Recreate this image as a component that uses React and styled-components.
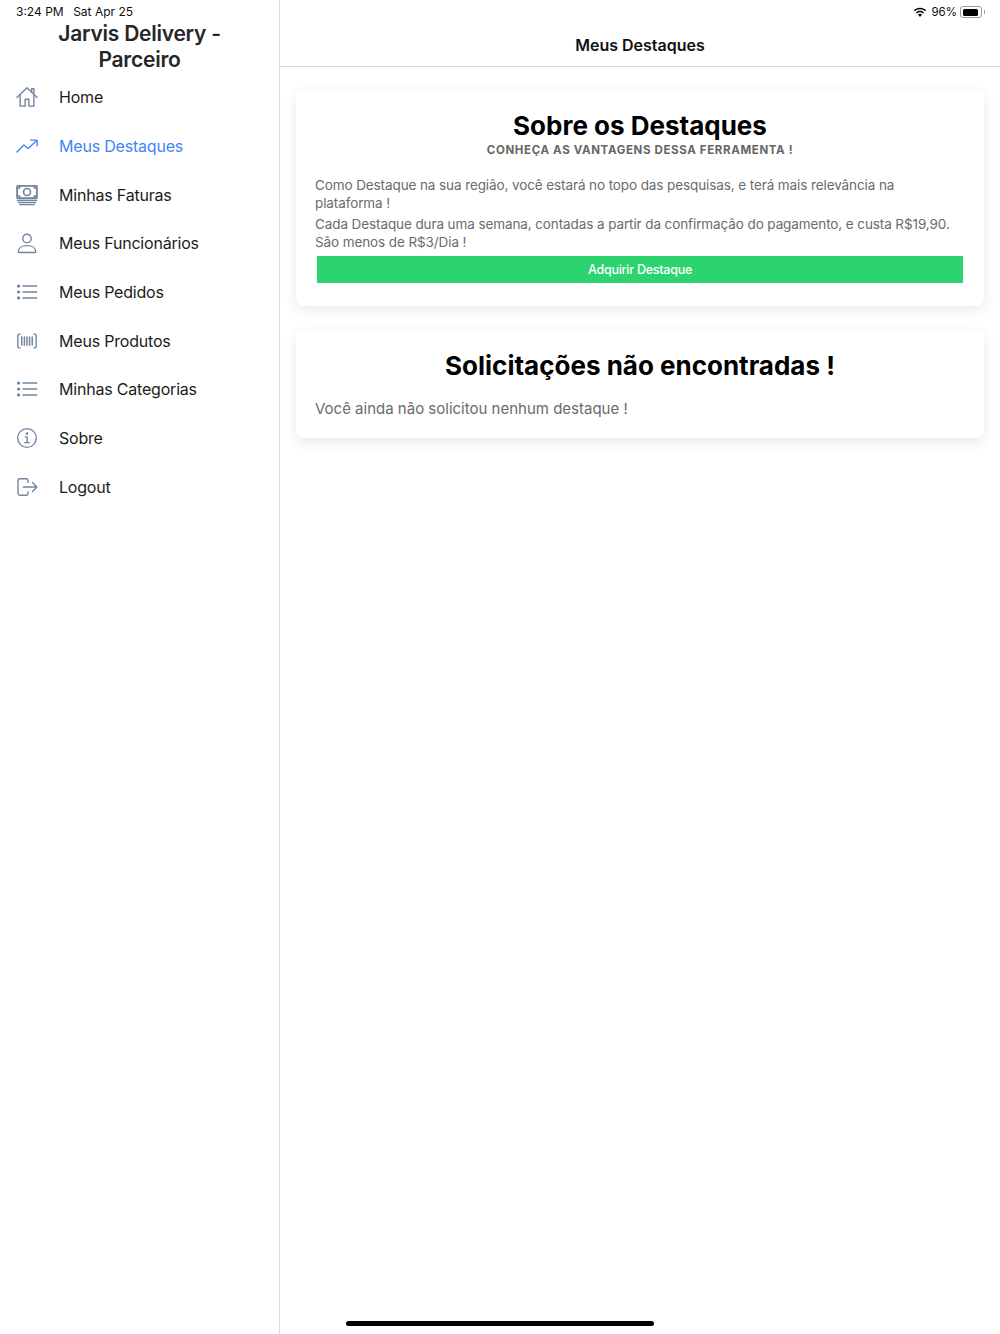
import React from 'react';
import styled, {createGlobalStyle} from 'styled-components';

const GlobalStyle = createGlobalStyle`
  html, body {
    margin: 0;
    padding: 0;
    height: 100%;
    background: #fff;
    font-family: Inter, "Noto Sans", sans-serif;
  }
  #root {
    height: 100%;
  }
`

const IconBase = ({children, size = 22}) => (
    <svg width={size} height={size} viewBox="0 0 24 24" fill="none" stroke="currentColor" strokeWidth="1.5" strokeLinecap="round" strokeLinejoin="round">
        {children}
    </svg>
)

const HomeIcon = () => (
    <IconBase>
        <path d="M1 12.5 12 2l11 10.500"/>
        <path d="M4.500 10v12h5.500v-7.500h4V22h5.500V10"/>
        <path d="M17 6V3h2.500v5.200"/>
    </IconBase>
)

const TrendIcon = () => (
    <IconBase>
        <path d="M1 18.500 8.600 11l4.600 3.800L22.400 6.400"/>
        <path d="M16 5.600h7v6.200"/>
    </IconBase>
)

const MoneyIcon = () => (
    <IconBase>
        <rect x="1.200" y="2" width="21.600" height="13.500" rx="0.800" strokeWidth="2"/>
        <circle cx="12" cy="8.700" r="3.800" strokeWidth="1.800"/>
        <path d="M1.500 5c2 0 3-1 3.200-2.600M22.500 5c-2 0-3-1-3.200-2.600M1.500 12.500c2 0 3 1 3.200 2.600M22.500 12.500c-2 0-3 1-3.200 2.600"/>
        <path d="M1.500 18h21M2.500 20.300h19M4 22.500h16" strokeWidth="1.400"/>
    </IconBase>
)

const UserIcon = () => (
    <IconBase>
        <circle cx="12" cy="7" r="4.600"/>
        <path d="M2.500 21.500c0-4.200 4-6.600 9.500-6.600s9.500 2.400 9.500 6.600c0 .5-.4.900-.9.900H3.400c-.5 0-.9-.4-.9-.9Z"/>
    </IconBase>
)

const ListIcon = () => (
    <IconBase>
        <path d="M7.500 5.500h15M7.500 12h15M7.500 18.500h15"/>
        <circle cx="2.800" cy="5.500" r="1" fill="currentColor"/>
        <circle cx="2.800" cy="12" r="1" fill="currentColor"/>
        <circle cx="2.800" cy="18.500" r="1" fill="currentColor"/>
    </IconBase>
)

const BarcodeIcon = () => (
    <IconBase>
        <path d="M4.500 4.500H3.200C2.500 4.500 2 5 2 5.700v12.600c0 .7.500 1.200 1.200 1.200h1.300M19.500 4.500h1.300c.7 0 1.200.5 1.200 1.200v12.600c0 .7-.5 1.200-1.200 1.200h-1.300"/>
        <path d="M6.300 7.500v9M9.200 7.500v9M12 7.500v9M14.800 7.500v9M17.700 7.500v9" strokeWidth="1.600"/>
    </IconBase>
)

const InfoIcon = () => (
    <IconBase>
        <circle cx="12" cy="12" r="10.200"/>
        <path d="M10 10.800h2.200V17M9.600 17h5"/>
        <circle cx="12" cy="7.200" r="0.700" fill="currentColor"/>
    </IconBase>
)

const LogoutIcon = () => (
    <IconBase>
        <path d="M13 7V4.600c0-1-.8-1.600-1.600-1.600H4.200C3 3 2.200 3.800 2.200 4.900v14.200c0 1.100.8 1.900 2 1.900h7.200c.8 0 1.600-.6 1.600-1.600V17"/>
        <path d="M8 12h14.500M18 7l4.800 5-4.800 5"/>
    </IconBase>
)

const WifiIcon = () => (
    <svg width="14" height="11" viewBox="0 0 16 12" fill="#000">
        <path d="M8 2.200c2.300 0 4.400.9 6 2.400l1.100-1.200C13.200 1.600 10.700.5 8 .5S2.800 1.600.9 3.400L2 4.600c1.600-1.500 3.700-2.400 6-2.400Z"/>
        <path d="M8 5.700c1.300 0 2.500.5 3.500 1.400l1.100-1.200C11.400 4.700 9.800 4 8 4s-3.400.7-4.600 1.900l1.100 1.200c1-.9 2.200-1.400 3.500-1.400Z"/>
        <path d="M8 7.500c-.9 0-1.700.3-2.300.9L8 11l2.300-2.600c-.6-.6-1.400-.9-2.300-.9Z"/>
    </svg>
)

const MENU = [
    {label: 'Home', icon: HomeIcon},
    {label: 'Meus Destaques', icon: TrendIcon, active: true},
    {label: 'Minhas Faturas', icon: MoneyIcon},
    {label: 'Meus Funcionários', icon: UserIcon},
    {label: 'Meus Pedidos', icon: ListIcon},
    {label: 'Meus Produtos', icon: BarcodeIcon},
    {label: 'Minhas Categorias', icon: ListIcon},
    {label: 'Sobre', icon: InfoIcon},
    {label: 'Logout', icon: LogoutIcon},
]

const App = () => {
    return (
        <Page>
            <GlobalStyle/>
            <Sidebar>
                <Brand>Jarvis Delivery - Parceiro</Brand>
                <Menu>
                    {MENU.map(({label, icon: Icon, active}) => (
                        <MenuItem key={label} $active={active}>
                            <MenuIcon $active={active}><Icon/></MenuIcon>
                            {label}
                        </MenuItem>
                    ))}
                </Menu>
            </Sidebar>
            <Main>
                <Header>Meus Destaques</Header>
                <Content>
                    <Card>
                        <CardTitle>Sobre os Destaques</CardTitle>
                        <CardSubtitle>Conheça as vantagens dessa ferramenta !</CardSubtitle>
                        <Paragraph>Como Destaque na sua região, você estará no topo das pesquisas, e terá mais relevância na plataforma !</Paragraph>
                        <Paragraph>Cada Destaque dura uma semana, contadas a partir da confirmação do pagamento, e custa R$19,90. São menos de R$3/Dia !</Paragraph>
                        <BuyButton>Adquirir Destaque</BuyButton>
                    </Card>
                    <Card $compact>
                        <CardTitle>Solicitações não encontradas !</CardTitle>
                        <EmptyText>Você ainda não solicitou nenhum destaque !</EmptyText>
                    </Card>
                </Content>
            </Main>
            <StatusLeft>
                <span>3:24 PM</span>
                <span>Sat Apr 25</span>
            </StatusLeft>
            <StatusRight>
                <WifiIcon/>
                <span>96%</span>
                <Battery><BatteryFill/></Battery>
                <BatteryCap/>
            </StatusRight>
            <HomeIndicator/>
        </Page>
    );
};

const Page = styled.div`
  display: flex;
  position: relative;
  width: 1000px;
  height: 1334px;
  overflow: hidden;
  background: #fff;
`

const Sidebar = styled.aside`
  flex: 0 0 280px;
  box-sizing: border-box;
  padding-top: 21px;
  border-right: 1px solid #d9d9d9;
`

const Brand = styled.div`
  width: 190px;
  margin: 0 auto;
  color: #262626;
  font-size: 21px;
  font-weight: 600;
  letter-spacing: -0.25px;
  line-height: 26px;
  text-align: center;
`

const Menu = styled.nav`
  display: flex;
  flex-direction: column;
`

const MenuItem = styled.div`
  display: flex;
  align-items: center;
  height: 48.7px;
  padding-left: 16px;
  color: ${({$active}) => ($active ? '#3f85f5' : '#1c1c1c')};
  font-size: 16px;
  letter-spacing: -0.2px;
`

const MenuIcon = styled.span`
  display: flex;
  align-items: center;
  width: 43px;
  color: ${({$active}) => ($active ? '#3f85f5' : '#72859f')};
`

const Main = styled.main`
  flex: 1;
  min-width: 0;
`

const Header = styled.header`
  box-sizing: border-box;
  height: 67px;
  padding-top: 35px;
  border-bottom: 1px solid #d9d9d9;
  color: #111;
  font-size: 16px;
  font-weight: 600;
  line-height: 21px;
  text-align: center;
`

const Content = styled.div`
  display: flex;
  flex-direction: column;
  gap: 24px;
  padding: 23px 16px 0;
`

const Card = styled.section`
  box-sizing: border-box;
  height: ${({$compact}) => ($compact ? '108px' : '216px')};
  padding: 20px 19px;
  border-radius: 8px;
  background: #fff;
  box-shadow: 0 4px 14px rgba(0, 0, 0, 0.09);
`

const CardTitle = styled.h2`
  margin: 0;
  color: #000;
  font-size: 26px;
  font-weight: 700;
  line-height: 31px;
  text-align: center;
`

const CardSubtitle = styled.div`
  margin: 1px 0 17px;
  color: #666;
  font-size: 11.5px;
  font-weight: 700;
  letter-spacing: 0.64px;
  line-height: 17px;
  text-align: center;
  text-transform: uppercase;
`

const Paragraph = styled.p`
  margin: 0 0 3px;
  color: #6b6b6b;
  font-size: 13.5px;
  letter-spacing: -0.1px;
  line-height: 18px;
`

const BuyButton = styled.div`
  height: 27px;
  margin: 5px 2px 0;
  background: #2dd36f;
  color: #fff;
  font-size: 12.5px;
  font-weight: 500;
  letter-spacing: -0.25px;
  line-height: 27px;
  text-align: center;
`

const EmptyText = styled.p`
  margin: 17px 0 0;
  color: #6b6b6b;
  font-size: 15px;
  line-height: 22px;
`

const StatusLeft = styled.div`
  position: absolute;
  top: 5px;
  left: 16px;
  display: flex;
  gap: 9.5px;
  color: #111;
  font-size: 12px;
  line-height: 14px;
`

const StatusRight = styled.div`
  position: absolute;
  top: 5px;
  right: 15px;
  display: flex;
  align-items: center;
  color: #111;
  font-size: 11.5px;
  line-height: 14px;

  span {
    margin: 0 3px 0 4px;
  }
`

const Battery = styled.div`
  box-sizing: border-box;
  width: 22px;
  height: 12px;
  padding: 1.5px;
  border: 1px solid #9a9a9a;
  border-radius: 3px;
`

const BatteryFill = styled.div`
  width: 92%;
  height: 100%;
  border-radius: 1.5px;
  background: #000;
`

const BatteryCap = styled.div`
  width: 1.5px;
  height: 4px;
  margin-left: 1.5px;
  border-radius: 0 1px 1px 0;
  background: #9a9a9a;
`

const HomeIndicator = styled.div`
  position: absolute;
  left: 346px;
  bottom: 8px;
  width: 308px;
  height: 5px;
  border-radius: 3px;
  background: #000;
`

export default App;
